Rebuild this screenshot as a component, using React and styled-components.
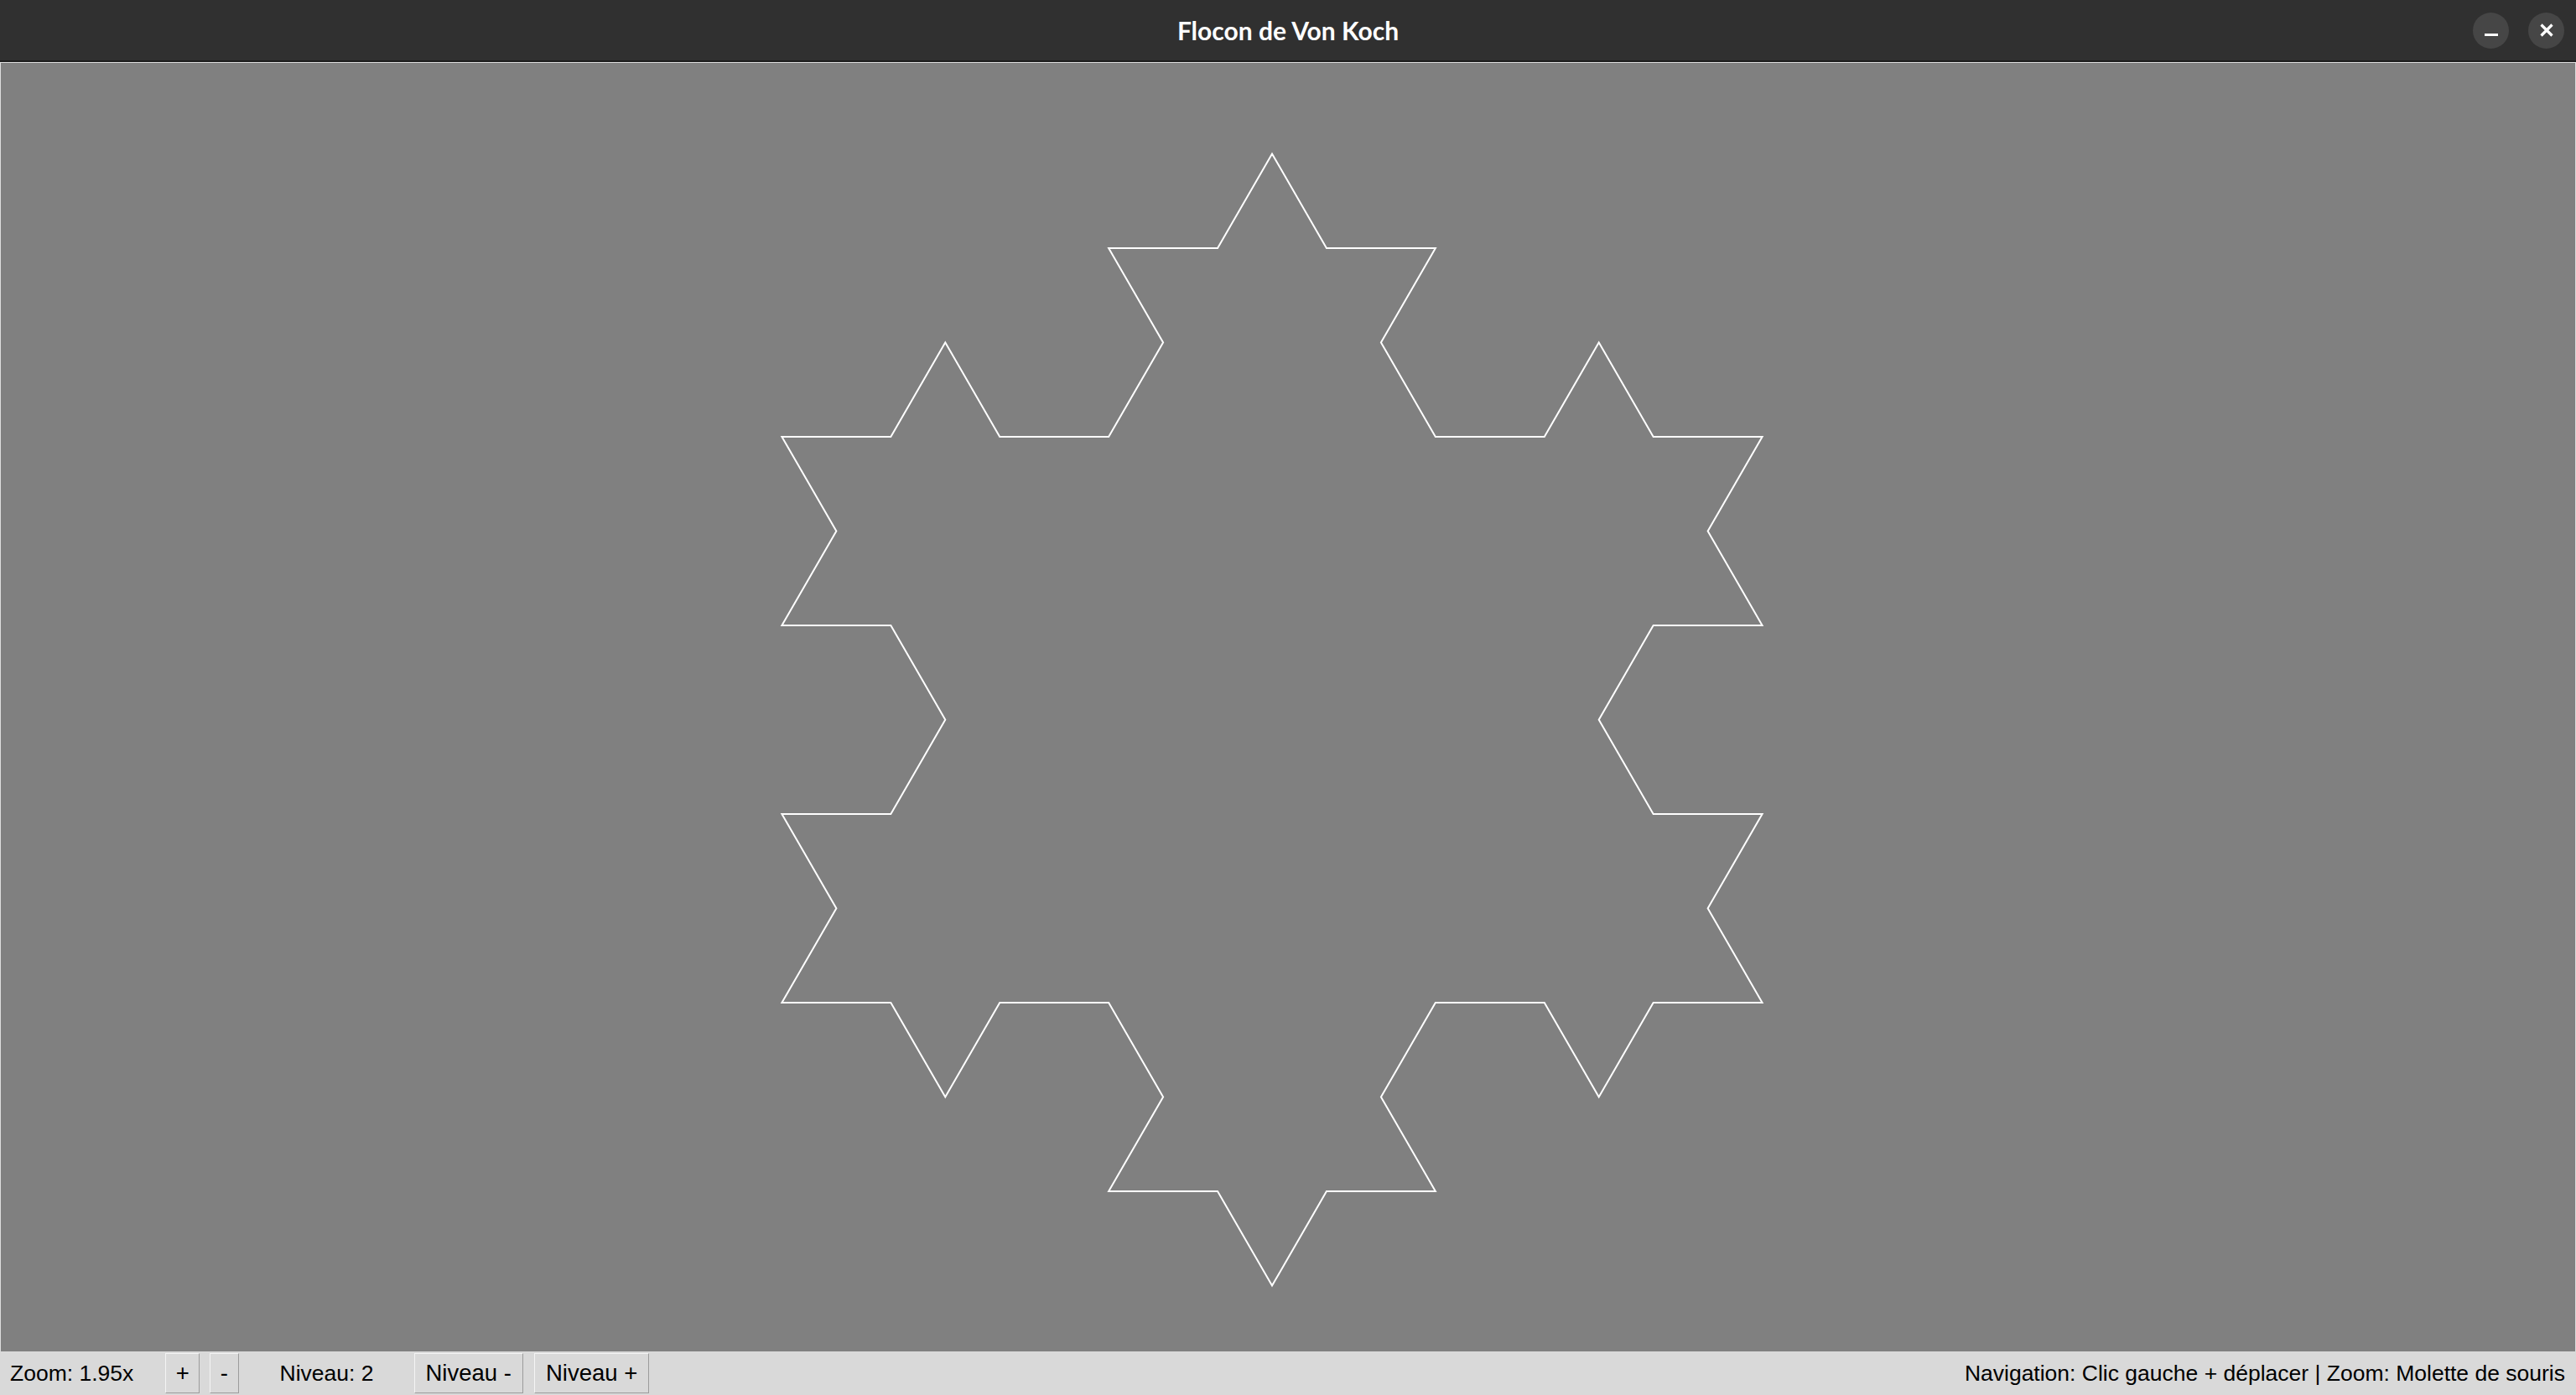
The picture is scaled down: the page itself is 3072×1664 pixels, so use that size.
import styled, { createGlobalStyle } from "styled-components";

const GlobalStyle = createGlobalStyle`
  html, body {
    margin: 0;
    padding: 0;
  }
  body {
    overflow: hidden;
    background: #303030;
  }
`;

const Window = styled.div`
  display: flex;
  flex-direction: column;
  width: 100vw;
  height: 100vh;
  overflow: hidden;
`;

const TitleBar = styled.header`
  flex: 0 0 auto;
  height: 72px;
  display: grid;
  grid-template-columns: 1fr auto 1fr;
  align-items: center;
  background: #303030;
  border-bottom: 2px solid #1c1c1c;
`;

const Title = styled.h1`
  grid-column: 2;
  margin: 0;
  font-family: Lato, "Noto Sans", sans-serif;
  font-weight: 700;
  font-size: 30px;
  color: #ffffff;
`;

const WindowControls = styled.div`
  grid-column: 3;
  justify-self: end;
  display: flex;
  gap: 23px;
  margin-right: 14px;
`;

const ControlButton = styled.div`
  width: 43px;
  height: 43px;
  border-radius: 50%;
  background: #464646;
  display: grid;
  place-items: center;
`;

const Canvas = styled.main`
  flex: 1;
  min-height: 0;
  border: 1px solid #dcdcdc;
  border-bottom: none;
  background: #808080;

  svg {
    display: block;
    width: 100%;
    height: 100%;
  }
`;

const StatusBar = styled.footer`
  flex: 0 0 auto;
  height: 52px;
  display: flex;
  align-items: flex-start;
  background: #d9d9d9;
  font-family: "Liberation Sans", Arial, sans-serif;
  font-size: 26.5px;
  color: #000;
`;

const Label = styled.span`
  margin-top: 11px;
  margin-left: ${({ $left }) => ($left === "auto" ? "auto" : `${$left}px`)};
  margin-right: ${({ $right }) => $right || 0}px;
  line-height: 30px;
  white-space: nowrap;
`;

const Button = styled.button`
  margin-top: 2px;
  margin-left: ${({ $left }) => $left}px;
  padding: 8px ${({ $wide }) => ($wide ? 13 : 11.5)}px;
  border: 1px solid;
  border-color: #f4f4f4 #9c9c9c #9c9c9c #f4f4f4;
  background: #d9d9d9;
  font-family: inherit;
  font-size: 27.5px;
  line-height: 30px;
  color: #000;
  white-space: nowrap;
`;

// koch curve, clockwise on screen so bumps point outward
function kochSide(a, b, depth) {
  if (depth === 0) return [a];
  const dx = (b[0] - a[0]) / 3;
  const dy = (b[1] - a[1]) / 3;
  const p1 = [a[0] + dx, a[1] + dy];
  const p3 = [a[0] + 2 * dx, a[1] + 2 * dy];
  const p2 = [p1[0] + 0.5 * dx + (Math.sqrt(3) / 2) * dy, p1[1] - (Math.sqrt(3) / 2) * dx + 0.5 * dy];
  return [
    ...kochSide(a, p1, depth - 1),
    ...kochSide(p1, p2, depth - 1),
    ...kochSide(p2, p3, depth - 1),
    ...kochSide(p3, b, depth - 1),
  ];
}

function snowflake(cx, cy, r, depth) {
  const h = (r * Math.sqrt(3)) / 2;
  const top = [cx, cy - r];
  const right = [cx + h, cy + r / 2];
  const left = [cx - h, cy + r / 2];
  return [...kochSide(top, right, depth), ...kochSide(right, left, depth), ...kochSide(left, top, depth)]
    .map((p) => `${p[0].toFixed(2)},${p[1].toFixed(2)}`)
    .join(" ");
}

const level = 2;
const points = snowflake(1516, 783.5, 675, level);

export default function App() {
  return (
    <>
      <GlobalStyle />
      <Window>
        <TitleBar>
          <Title>Flocon de Von Koch</Title>
          <WindowControls>
            <ControlButton>
              <svg width="16" height="16" viewBox="0 0 16 16">
                <rect x="0" y="12" width="16" height="3" fill="#fff" />
              </svg>
            </ControlButton>
            <ControlButton>
              <svg width="16" height="16" viewBox="0 0 16 16">
                <path d="M1.5 1.5 L14.5 14.5 M14.5 1.5 L1.5 14.5" stroke="#fff" strokeWidth="3.2" />
              </svg>
            </ControlButton>
          </WindowControls>
        </TitleBar>

        <Canvas>
          <svg>
            <polygon points={points} fill="none" stroke="#ffffff" strokeWidth="2" />
          </svg>
        </Canvas>

        <StatusBar>
          <Label $left={12}>Zoom: 1.95x</Label>
          <Button $left={38}>+</Button>
          <Button $left={12}>-</Button>
          <Label $left={49}>Niveau: {level}</Label>
          <Button $left={48} $wide>Niveau -</Button>
          <Button $left={13} $wide>Niveau +</Button>
          <Label $left="auto" $right={13}>
            Navigation: Clic gauche + déplacer | Zoom: Molette de souris
          </Label>
        </StatusBar>
      </Window>
    </>
  );
}
